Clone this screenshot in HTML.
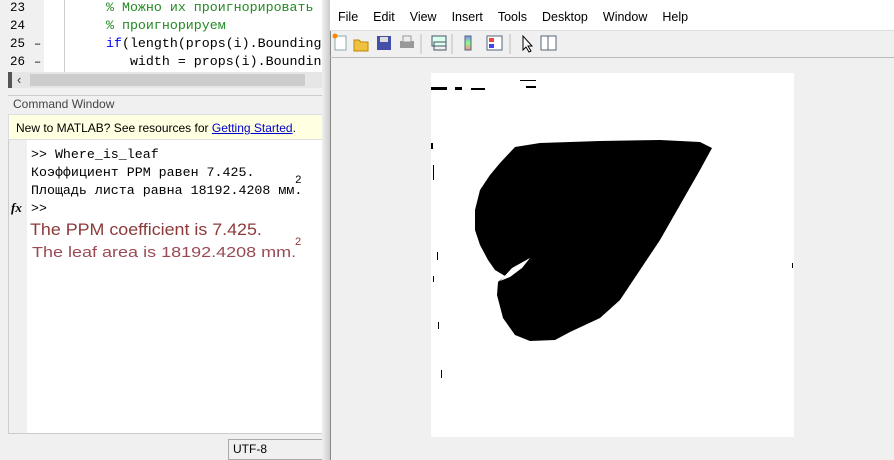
<!DOCTYPE html>
<html><head><meta charset="utf-8"><style>
*{margin:0;padding:0;box-sizing:border-box}
body{width:894px;height:460px;overflow:hidden;background:#f0f0f0;font-family:"Liberation Sans",sans-serif;position:relative}
.abs{position:absolute}
.mono{font-family:"Liberation Mono","DejaVu Sans Mono",monospace;font-size:13px}
</style></head><body>
<div class="abs" style="left:0;top:0;width:330px;height:72px;background:#fff"></div>
<div class="abs" style="left:0;top:0;width:30px;height:72px;background:#f0f0f0"></div>
<div class="abs" style="left:30px;top:0;width:14px;height:72px;background:#f0f0f0"></div>
<div class="abs" style="left:64px;top:0;width:1px;height:72px;background:#ccc"></div>
<div class="abs mono" style="left:10px;top:-1px;line-height:18px;color:#000;font-size:12.5px">23<br>24<br>25<br>26</div>
<div class="abs mono" style="left:34px;top:-1px;line-height:18px;font-size:12px">&nbsp;<br>&nbsp;<br>–<br>–</div>
<div class="abs mono" style="left:106px;top:-1px;line-height:18px;white-space:nowrap;font-size:13.3px"><span style="color:#228b22">% Можно их проигнорировать и</span><br><span style="color:#228b22">% проигнорируем</span><br><span style="color:#00f">if</span>(length(props(i).BoundingB<br>&nbsp;&nbsp;&nbsp;width = props(i).Boundin</div>
<div class="abs" style="left:8px;top:72px;width:322px;height:16px;background:#e6e6e6"></div>
<div class="abs" style="left:30px;top:74px;width:275px;height:12px;background:#cdcdcd"></div>
<div class="abs" style="left:8px;top:72px;width:4px;height:16px;background:#555"></div>
<div class="abs" style="left:17px;top:72px;font-size:13px;line-height:16px;color:#333">‹</div>
<div class="abs" style="left:8px;top:95px;width:322px;height:1px;background:#ccc"></div>
<div class="abs" style="left:13px;top:97px;font-size:12px;color:#444">Command Window</div>
<div class="abs" style="left:8px;top:114px;width:322px;height:26px;background:#ffffe1;border:1px solid #ddd"></div>
<div class="abs" style="left:16px;top:121px;font-size:12px;color:#000">New to MATLAB? See resources for <span style="color:#00c;text-decoration:underline">Getting Started</span>.</div>
<div class="abs" style="left:8px;top:140px;width:322px;height:294px;background:#fff;border-bottom:1px solid #ccc;border-left:1px solid #ccc"></div>
<div class="abs" style="left:9px;top:140px;width:18px;height:293px;background:#f0f0f0"></div>
<div class="abs mono" style="left:31px;top:146px;line-height:18px;white-space:nowrap;font-size:13.3px">&gt;&gt; Where_is_leaf<br>Коэффициент PPM равен 7.425.<br>Площадь листа равна 18192.4208 мм.<br>&gt;&gt;</div>
<div class="abs" style="left:295px;top:175px;font-size:11px;font-family:'Liberation Mono',monospace">2</div>
<div class="abs" style="left:11px;top:200px;font-family:'Liberation Serif',serif;font-style:italic;font-weight:bold;font-size:13px">fx</div>
<div class="abs" style="left:30px;top:220px;font-size:17px;color:#8b3a3a;transform:scaleX(1.05);transform-origin:0 0;white-space:nowrap">The PPM coefficient is 7.425.</div>
<div class="abs" style="left:32px;top:244px;font-size:15px;color:#9b4a55;transform:scaleX(1.2);transform-origin:0 0;white-space:nowrap">The leaf area is 18192.4208 mm.</div>
<div class="abs" style="left:295px;top:236px;font-size:11px;color:#8b3a3a">2</div>
<div class="abs" style="left:228px;top:439px;width:104px;height:21px;border:1px solid #aaa;border-right:none;background:#f0f0f0;font-size:12px;padding:2px 4px">UTF-8</div>
<div class="abs" style="left:322px;top:0;width:8px;height:460px;background:linear-gradient(90deg,#f0f0f0,#ccc)"></div>
<div class="abs" style="left:330px;top:0;width:564px;height:460px;background:#f0f0f0;border-left:1px solid #888"></div>
<div class="abs" style="left:330px;top:0;width:564px;height:30px;background:#fff"></div>
<div class="abs" style="left:338px;top:10px;font-size:12.5px;word-spacing:0;white-space:nowrap">
<span style="margin-right:15px">File</span><span style="margin-right:15px">Edit</span><span style="margin-right:15px">View</span><span style="margin-right:15px">Insert</span><span style="margin-right:15px">Tools</span><span style="margin-right:15px">Desktop</span><span style="margin-right:15px">Window</span><span>Help</span></div>
<div class="abs" style="left:330px;top:30px;width:564px;height:1px;background:#ddd"></div>
<svg class="abs" style="left:330px;top:30px" width="230" height="28">
<rect x="5" y="6" width="11" height="14" fill="#fff" stroke="#8aa"/><circle cx="5" cy="6" r="2.5" fill="#f80"/>
<path d="M24 10h5l2 2h7v9H24z" fill="#f0c040" stroke="#b80"/>
<rect x="47" y="6" width="14" height="14" fill="#4450a8"/><rect x="50" y="7" width="8" height="5" fill="#ddd"/>
<rect x="70" y="11" width="14" height="7" fill="#999"/><rect x="73" y="6" width="8" height="6" fill="#eee" stroke="#999"/>
<line x1="91" y1="4" x2="91" y2="24" stroke="#bbb"/>
<rect x="102" y="6" width="14" height="10" fill="#dfe" stroke="#456"/><rect x="104" y="12" width="12" height="8" fill="none" stroke="#456"/>
<line x1="122" y1="4" x2="122" y2="24" stroke="#bbb"/>
<rect x="135" y="6" width="6" height="14" fill="url(#g)" stroke="#567"/>
<defs><linearGradient id="g" x1="0" y1="0" x2="0" y2="1"><stop offset="0" stop-color="#88f"/><stop offset=".5" stop-color="#8f8"/><stop offset="1" stop-color="#f88"/></linearGradient></defs>
<rect x="157" y="6" width="15" height="14" fill="#fff" stroke="#567"/><rect x="159" y="8" width="5" height="4" fill="#e44"/><rect x="159" y="14" width="5" height="4" fill="#44e"/>
<line x1="180" y1="4" x2="180" y2="24" stroke="#bbb"/>
<path d="M193 6v14l3-3 3 5 2-1-3-5h4z" fill="#fff" stroke="#000"/>
<rect x="211" y="6" width="15" height="14" fill="#fff" stroke="#567"/><line x1="218" y1="6" x2="218" y2="20" stroke="#567"/>
</svg>
<div class="abs" style="left:330px;top:57px;width:564px;height:1px;background:#bbb"></div>
<div class="abs" style="left:431px;top:73px;width:363px;height:364px;background:#fff"></div>
<svg class="abs" style="left:0;top:0" width="894" height="460">
<path d="M515 147L540 143L600 141L660 140L700 142L712 148L700 170L680 205L660 240L640 270L620 300L600 318L570 332L555 340L530 341L515 335L503 318L497 295L498 282L505 276L495 270L488 260L480 245L475 230L475 210L480 190L490 175L500 163Z" fill="#000"/>
<path d="M500 281L512 268L530 258L522 268L510 277Z" fill="#fff"/>
<rect x="431" y="87" width="16" height="3" fill="#000"/><rect x="455" y="87" width="7" height="3" fill="#000"/><rect x="471" y="88" width="14" height="2" fill="#000"/><rect x="520" y="80" width="16" height="1" fill="#000"/><rect x="526" y="86" width="10" height="2" fill="#000"/>
<rect x="431" y="143" width="2" height="6" fill="#000"/><rect x="433" y="165" width="1" height="15" fill="#000"/><rect x="437" y="252" width="1" height="8" fill="#000"/><rect x="433" y="276" width="1" height="6" fill="#000"/><rect x="438" y="322" width="1" height="7" fill="#000"/><rect x="441" y="370" width="1" height="8" fill="#000"/><rect x="792" y="263" width="1" height="5" fill="#000"/>
</svg>
</body></html>
